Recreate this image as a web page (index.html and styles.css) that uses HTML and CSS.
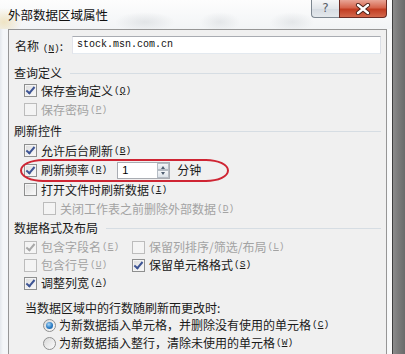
FILE: index.html
```html
<!DOCTYPE html>
<html>
<head>
    <title>外部数据区域属性</title>
    <link rel="stylesheet" href="styles.css">
</head>
<body>
<div class="screen">
    <div class="window">
        <div class="titlebar">
            <span class="title">外部数据区域属性</span>
            <div class="caption-buttons">
                <span class="btn-help">?</span>
                <span class="btn-close">
                    <svg width="16" height="12" viewBox="0 0 16 12">
                        <path d="M3 2 L13 10 M13 2 L3 10" stroke="#4a2018" stroke-width="4.2" stroke-linecap="round"/>
                        <path d="M3 2 L13 10 M13 2 L3 10" stroke="#ffffff" stroke-width="2.4" stroke-linecap="round"/>
                    </svg>
                </span>
            </div>
        </div>

        <div class="client">
            <div class="name-row">
                <label class="name-label">名称 <span class="k">(<u>N</u>)</span>:</label>
                <div class="textbox">stock.msn.com.cn</div>
            </div>

            <div class="group-title"><span>查询定义</span></div>
            <div class="row in1"><span class="cb checked"></span>保存查询定义 <span class="k">(<u>Q</u>)</span></div>
            <div class="row in1 disabled"><span class="cb"></span>保存密码 <span class="k">(<u>P</u>)</span></div>

            <div class="group-title second"><span>刷新控件</span></div>
            <div class="row in1"><span class="cb checked"></span>允许后台刷新 <span class="k">(<u>B</u>)</span></div>
            <div class="row in1 spin-row">
                <span class="cb checked"></span>刷新频率 <span class="k">(<u>R</u>)</span>
                <div class="spin">
                    <span class="spin-value">1</span>
                    <span class="spin-buttons">
                        <span class="spin-up"></span>
                        <span class="spin-down"></span>
                    </span>
                </div>
                <span class="unit">分钟</span>
                <span class="mark"></span>
            </div>
            <div class="row in1"><span class="cb"></span>打开文件时刷新数据 <span class="k">(<u>I</u>)</span></div>
            <div class="row in2 disabled"><span class="cb"></span>关闭工作表之前删除外部数据 <span class="k">(<u>D</u>)</span></div>

            <div class="group-title third"><span>数据格式及布局</span></div>
            <div class="format-grid">
                <div class="row short disabled"><span class="cb checked"></span>包含字段名 <span class="k">(<u>E</u>)</span></div>
                <div class="row short disabled"><span class="cb"></span>保留列排序/筛选/布局 <span class="k">(<u>L</u>)</span></div>
                <div class="row short disabled"><span class="cb"></span>包含行号 <span class="k">(<u>U</u>)</span></div>
                <div class="row short"><span class="cb checked"></span>保留单元格格式 <span class="k">(<u>S</u>)</span></div>
                <div class="row short"><span class="cb checked"></span>调整列宽 <span class="k">(<u>A</u>)</span></div>
            </div>

            <div class="change-note">当数据区域中的行数随刷新而更改时:</div>
            <div class="row radio-row in2"><span class="rb selected"></span>为新数据插入单元格，并删除没有使用的单元格 <span class="k">(<u>C</u>)</span></div>
            <div class="row radio-row in2"><span class="rb"></span>为新数据插入整行，清除未使用的单元格 <span class="k">(<u>W</u>)</span></div>
        </div>
    </div>
    <div class="edge"></div>
</div>
</body>
</html>
```

FILE: styles.css
```css
body {
    margin: 0;
    font-family: "Noto Sans CJK SC", sans-serif;
    font-size: 12px;
    color: #1a1a1a;
    background-color: #7a7a7a;
}

.screen {
    display: flex;
    width: 405px;
    height: 354px;
    overflow: hidden;
}

.window {
    width: 392px;
    flex: none;
    background: linear-gradient(to right, #e4e8ec 0, #f4f6f8 3px, #f4f6f8 385px, #fbfbfb 100%);
}

.edge {
    flex: 1;
    background: linear-gradient(to right, #3e3e3e 0, #3e3e3e 1px, #8c8c8c 1px, #7c7c7c 6px, #6a6a6a 100%);
}

/* title bar */
.titlebar {
    height: 29px;
    display: flex;
    align-items: flex-start;
    background:
        radial-gradient(ellipse 18px 14px at 4px 22px, rgba(235, 215, 160, 0.6), transparent),
        radial-gradient(ellipse 30px 10px at 145px 22px, rgba(190, 195, 200, 0.35), transparent),
        radial-gradient(ellipse 20px 10px at 220px 22px, rgba(190, 195, 200, 0.3), transparent),
        radial-gradient(ellipse 22px 10px at 292px 22px, rgba(190, 195, 200, 0.3), transparent),
        linear-gradient(#fdfdfd, #f2f4f6);
}

.title {
    margin: 6px 0 0 8px;
    font-size: 12.5px;
    line-height: 18px;
    color: #111;
}

.caption-buttons {
    display: flex;
    margin-left: auto;
    margin-right: 5px;
}

.btn-help {
    width: 28px;
    height: 18px;
    box-sizing: border-box;
    border: 1px solid #7d8790;
    border-top: none;
    border-right: none;
    border-bottom-left-radius: 4px;
    background: linear-gradient(#f6f7f8, #e2e6ea 50%, #d6dce2 51%, #e4e8ec);
    color: #5a6068;
    font-family: "DejaVu Sans", sans-serif;
    font-size: 12px;
    line-height: 16px;
    text-align: center;
}

.btn-close {
    width: 48px;
    height: 18px;
    box-sizing: border-box;
    border: 1px solid #6c2a22;
    border-top: none;
    border-bottom-right-radius: 4px;
    background: linear-gradient(#e9a596, #d6654d 45%, #c23d22 55%, #d3684c);
    display: flex;
    align-items: center;
    justify-content: center;
}

/* client area */
.client {
    margin-left: 8px;
    width: 379px;
    height: 330px;
    box-sizing: border-box;
    border: 1px solid #969696;
    border-bottom: none;
    background-color: #f0f0f0;
    padding: 6px 5px 0 5px;
}

.name-row {
    display: flex;
    align-items: center;
    height: 18px;
}

.name-label {
    margin-left: 1px;
    width: 57px;
}

.textbox {
    flex: 1;
    height: 18px;
    box-sizing: border-box;
    border: 1px solid #a9acb2;
    border-color: #a9acb2 #dbdfe6 #e3e9ef #e2e3ea;
    background-color: #fff;
    padding-left: 4px;
    font-family: "Liberation Mono", monospace;
    font-size: 10px;
    line-height: 16px;
    color: #111;
}

.k {
    font-family: "Liberation Mono", monospace;
    font-size: 9.5px;
    margin-left: 1px;
}

.group-title {
    display: flex;
    align-items: center;
    height: 16px;
    line-height: 16px;
    margin-top: 11px;
}

.group-title::after {
    content: "";
    flex: 1;
    height: 1px;
    margin-left: 8px;
    background-color: #d6dde3;
}

.group-title.second {
    margin-top: 4px;
    margin-bottom: 2px;
}

.group-title.third {
    margin-top: 2px;
    margin-bottom: 2px;
}

.row {
    display: flex;
    align-items: center;
    height: 19px;
    line-height: 16px;
    white-space: nowrap;
}

.row.short {
    height: 18px;
}

.in1 {
    padding-left: 10px;
}

.in2 {
    padding-left: 29px;
}

.disabled {
    color: #a3a3a3;
}

/* checkboxes */
.cb {
    position: relative;
    width: 13px;
    height: 13px;
    flex: none;
    box-sizing: border-box;
    margin-right: 4px;
    border: 1px solid #8e8f8f;
    background: linear-gradient(135deg, #dcdcdc, #fbfbfb);
    box-shadow: inset 0 0 0 1px #f4f4f4;
}

.cb.checked::after {
    content: "";
    position: absolute;
    left: 3px;
    top: 0px;
    width: 3px;
    height: 7px;
    border-right: 2px solid #3d5494;
    border-bottom: 2px solid #3d5494;
    transform: rotate(40deg);
}

.disabled .cb {
    border-color: #bcbcbc;
    background: #f4f4f4;
}

.disabled .cb.checked::after {
    border-color: #a8a8a8;
}

/* refresh interval */
.spin-row {
    position: relative;
    height: 20px;
}

.spin {
    display: flex;
    width: 53px;
    height: 17px;
    box-sizing: border-box;
    margin-left: 10px;
    border: 1px solid #a9acb2;
    background-color: #fff;
}

.spin-value {
    flex: 1;
    padding-left: 4px;
    font-family: "Liberation Sans", sans-serif;
    font-size: 11px;
    line-height: 15px;
    color: #000;
}

.spin-buttons {
    display: flex;
    flex-direction: column;
    width: 12px;
}

.spin-up,
.spin-down {
    position: relative;
    flex: 1;
    border: 1px solid #b5bcc4;
    background: linear-gradient(#f4f6f8, #dde3e9);
}

.spin-up::after,
.spin-down::after {
    content: "";
    position: absolute;
    left: 3px;
    top: 2px;
    border-left: 2px solid transparent;
    border-right: 2px solid transparent;
}

.spin-up::after {
    border-bottom: 3px solid #4e5d70;
}

.spin-down::after {
    top: 1px;
    border-top: 3px solid #4e5d70;
}

.unit {
    margin-left: 7px;
}

.mark {
    position: absolute;
    left: 6px;
    top: -1px;
    width: 209px;
    height: 23px;
    box-sizing: border-box;
    border: 2px solid #cf2533;
    border-radius: 24px / 12px;
}

.format-grid {
    display: grid;
    grid-template-columns: 108px auto;
    padding-left: 10px;
}

.change-note {
    margin-top: 8px;
    padding-left: 11px;
    height: 16px;
    line-height: 16px;
}

/* radio buttons */
.radio-row {
    height: 18px;
}

.rb {
    position: relative;
    width: 13px;
    height: 13px;
    flex: none;
    box-sizing: border-box;
    margin-right: 3px;
    border: 1px solid #8e8f8f;
    border-radius: 50%;
    background: linear-gradient(135deg, #d8d8d8, #fcfcfc);
}

.rb.selected::after {
    content: "";
    position: absolute;
    left: 2px;
    top: 2px;
    width: 7px;
    height: 7px;
    border-radius: 50%;
    background: radial-gradient(circle at 40% 35%, #a9d6f6, #2a7cc4 55%, #1d5a9a);
}
```
